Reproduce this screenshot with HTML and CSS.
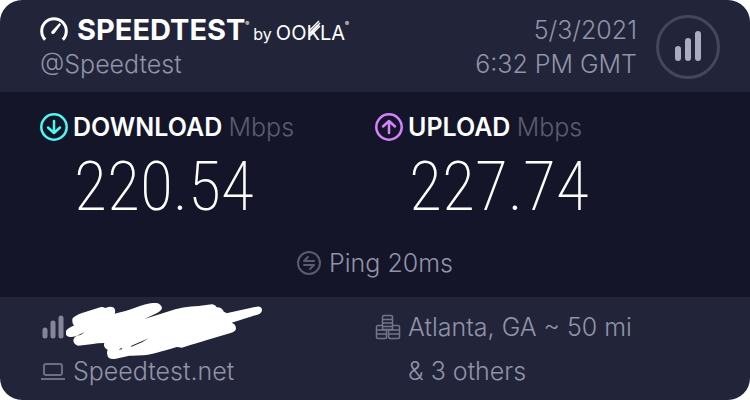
FILE: index.html
```
<!DOCTYPE html>
<html lang="en">
<head>
  <meta charset="UTF-8">
  <meta name="viewport" content="width=device-width, initial-scale=1.0">
  <title>Speedtest Result</title>
  <link rel="stylesheet" href="styles.css">
</head>
<body>
  <main class="card">
    <header class="header">
      <div class="brand">
        <div class="logo">
          <svg class="gauge" width="28" height="26" viewBox="0 0 28 26">
            <path d="M5.2 23.6A12.3 12.3 0 1 1 22.8 23.6" fill="none" stroke="#fff" stroke-width="3"/>
            <path d="M11.8 15.2L19.5 7L21 8.4L14.5 17.2Q13 18.5 11.6 17.4Q10.8 16.4 11.8 15.2Z" fill="#fff"/>
          </svg>
          <h1 class="title">SPEEDTEST<sup>®</sup></h1>
          <span class="by">by</span>
          <span class="ookla">OO<span class="k">K<svg class="rays" width="14" height="22" viewBox="0 0 14 22">
            <path d="M1 12L11 2M1 15L12 4M2 17L12 7" fill="none" stroke="#fff" stroke-width="1.500"/>
          </svg></span>LA<sup>®</sup></span>
        </div>
        <p class="handle">@Speedtest</p>
      </div>
      <div class="when">
        <p>5/3/2021</p>
        <p>6:32 PM GMT</p>
      </div>
      <div class="badge">
        <svg width="28" height="32" viewBox="0 0 28 32" stroke="#abacc1" stroke-width="6" stroke-linecap="round">
          <path d="M4 18V27M14 10V27M24 3V27"/>
        </svg>
      </div>
    </header>

    <section class="results">
      <div class="columns">
        <div class="result">
          <h2 class="label">
            <svg width="28" height="28" viewBox="0 0 28 28" fill="none" stroke="#4df8f0" stroke-width="2.500">
              <circle cx="14" cy="14" r="12.700"/>
              <path d="M14 8V20M8 14.5L14 20L20 14.5" stroke-linecap="round" stroke-linejoin="round"/>
            </svg>
            <span>DOWNLOAD <span class="unit">Mbps</span></span>
          </h2>
          <p class="number">220.54</p>
        </div>
        <div class="result">
          <h2 class="label">
            <svg width="28" height="28" viewBox="0 0 28 28" fill="none" stroke="#d582ff" stroke-width="2.500">
              <circle cx="14" cy="14" r="12.700"/>
              <path d="M14 20V8M8 13.5L14 8L20 13.5" stroke-linecap="round" stroke-linejoin="round"/>
            </svg>
            <span>UPLOAD <span class="unit">Mbps</span></span>
          </h2>
          <p class="number">227.74</p>
        </div>
      </div>
      <p class="ping">
        <svg width="24" height="24" viewBox="0 0 24 24" fill="none" stroke="#5a5a70" stroke-width="2">
          <circle cx="12" cy="12" r="11"/>
          <path d="M17 10H7L11 6M7 14H17L13 18" stroke-linecap="round" stroke-linejoin="round"/>
        </svg>
        Ping 20ms
      </p>
    </section>

    <footer class="footer columns">
      <div>
        <p class="row provider">
          <svg width="26" height="26" viewBox="0 0 26 26" stroke="#85869b" stroke-width="5" stroke-linecap="round">
            <path d="M5 16V22M13 9V22M21 4V22"/>
          </svg>
          <svg class="scribble" width="198" height="58" viewBox="0 0 594 174">
            <path fill="#fff" d="M3 84Q7 76 28 67Q21 63 22 48Q25 40 51 30L101 14Q111 10 121 15Q143 6 149 17Q152 25 149 32Q184 24 208 15Q258 -3 276 0Q289 4 291 15Q289 24 275 31L238 48L307 26Q355 10 401 9L440 4Q450 4 455 13Q471 12 477 27Q485 28 484 31L575 11Q589 9 591 20Q591 31 577 35L500 59Q513 64 513 77Q511 86 497 90Q395 120 350 134Q342 133 335 132Q265 154 235 157Q205 159 193 158L149 168Q129 170 127 156Q125 146 128 140Q113 132 118 120Q99 120 78 124L39 128Q25 124 25 111Q26 103 35 99Q6 107 3 94Z"/>
            <path fill="#222439" d="M34 99L59 87L48 95ZM199 128L251 106L231 118L198 132ZM161 140L170 134L171 139Z"/>
          </svg>
        </p>
        <p class="row">
          <svg width="26" height="20" viewBox="0 0 26 20" fill="none" stroke="#6d6e84" stroke-width="2">
            <rect x="4" y="3" width="18" height="11" rx="2"/>
            <path d="M1 18H25"/>
          </svg>
          Speedtest.net
        </p>
      </div>
      <div>
        <p class="row">
          <svg width="26" height="26" viewBox="0 0 26 26" fill="none" stroke="#74758a" stroke-width="1.500">
            <path d="M7.500 15.500V3Q7.500 1.500 9 1.500H16Q17.500 1.500 17.500 3V15.500ZM7.500 5.500H17.500M7.500 9H17.500M7.500 12.500H17.500"/>
            <path d="M7.500 11.500H3Q1.500 11.500 1.500 13V23Q1.500 24.500 3 24.500H10Q11.500 24.500 11.500 23V15.500M1.500 16H11.500M1.500 20H11.500"/>
            <path d="M17.500 11.500H23Q24.500 11.500 24.500 13V23Q24.500 24.500 23 24.500H15Q13.500 24.500 13.500 23V15.500M13.500 16H24.500M13.500 20H24.500"/>
          </svg>
          Atlanta, GA ~ 50 mi
        </p>
        <p class="row others">&amp; 3 others</p>
      </div>
    </footer>
  </main>
</body>
</html>
```

FILE: styles.css
```
body {
  margin: 0;
  background-color: #fff;
  font-family: Inter, "Liberation Sans", sans-serif;
  font-size: 25px;
  font-weight: 300;
  line-height: 32px;
  color: #9193a8;
}

h1,
h2,
p {
  margin: 0;
}

svg {
  flex: none;
}

.card {
  border-radius: 22px;
  overflow: hidden;
  background-color: #222439;
}

.header {
  display: flex;
  align-items: center;
  padding: 13px 30px 11px 40px;
  line-height: 34px;
}

.brand {
  flex: 1;
}

.logo {
  display: flex;
  align-items: baseline;
  height: 34px;
  color: #fff;
}

.gauge {
  align-self: flex-start;
  margin: 3px 9px 0 0;
}

.title {
  font-size: 29px;
  font-weight: 700;
}

sup {
  font-size: 6px;
  line-height: 0;
  vertical-align: 14px;
}

.by {
  margin: 0 4px;
  font-size: 16px;
  font-weight: 400;
}

.ookla {
  font-size: 20px;
  font-weight: 400;
}

.k {
  position: relative;
}

.rays {
  position: absolute;
  left: 2px;
  bottom: 4px;
}

.when {
  margin-right: 19px;
  text-align: right;
}

.badge {
  display: flex;
  align-items: center;
  justify-content: center;
  box-sizing: border-box;
  width: 64px;
  height: 64px;
  border: 3px solid #46455f;
  border-radius: 50%;
}

.results {
  padding: 20px 0 18px;
  background-color: #141529;
}

.columns {
  display: grid;
  grid-template-columns: 1fr 1fr;
  padding: 0 40px;
}

.label {
  display: flex;
  align-items: center;
  gap: 5px;
  font-size: 25px;
  font-weight: 600;
  line-height: 30px;
  color: #fff;
}

.unit {
  font-weight: 300;
  color: #5b5c70;
}

.number {
  margin: 8px 0 0 34px;
  font-family: "Roboto Condensed", Roboto, sans-serif;
  font-size: 68px;
  font-weight: 200;
  line-height: 74px;
  color: #fff;
}

.ping {
  display: flex;
  align-items: center;
  justify-content: center;
  gap: 8px;
  margin-top: 23px;
}

.footer {
  padding: 8px 40px 7px;
}

.row {
  display: flex;
  align-items: center;
  gap: 7px;
  height: 44px;
}

.others {
  padding-left: 33px;
}

.provider {
  position: relative;
}

/* hides the provider name */
.scribble {
  position: absolute;
  left: 25px;
  top: -2px;
}
```
